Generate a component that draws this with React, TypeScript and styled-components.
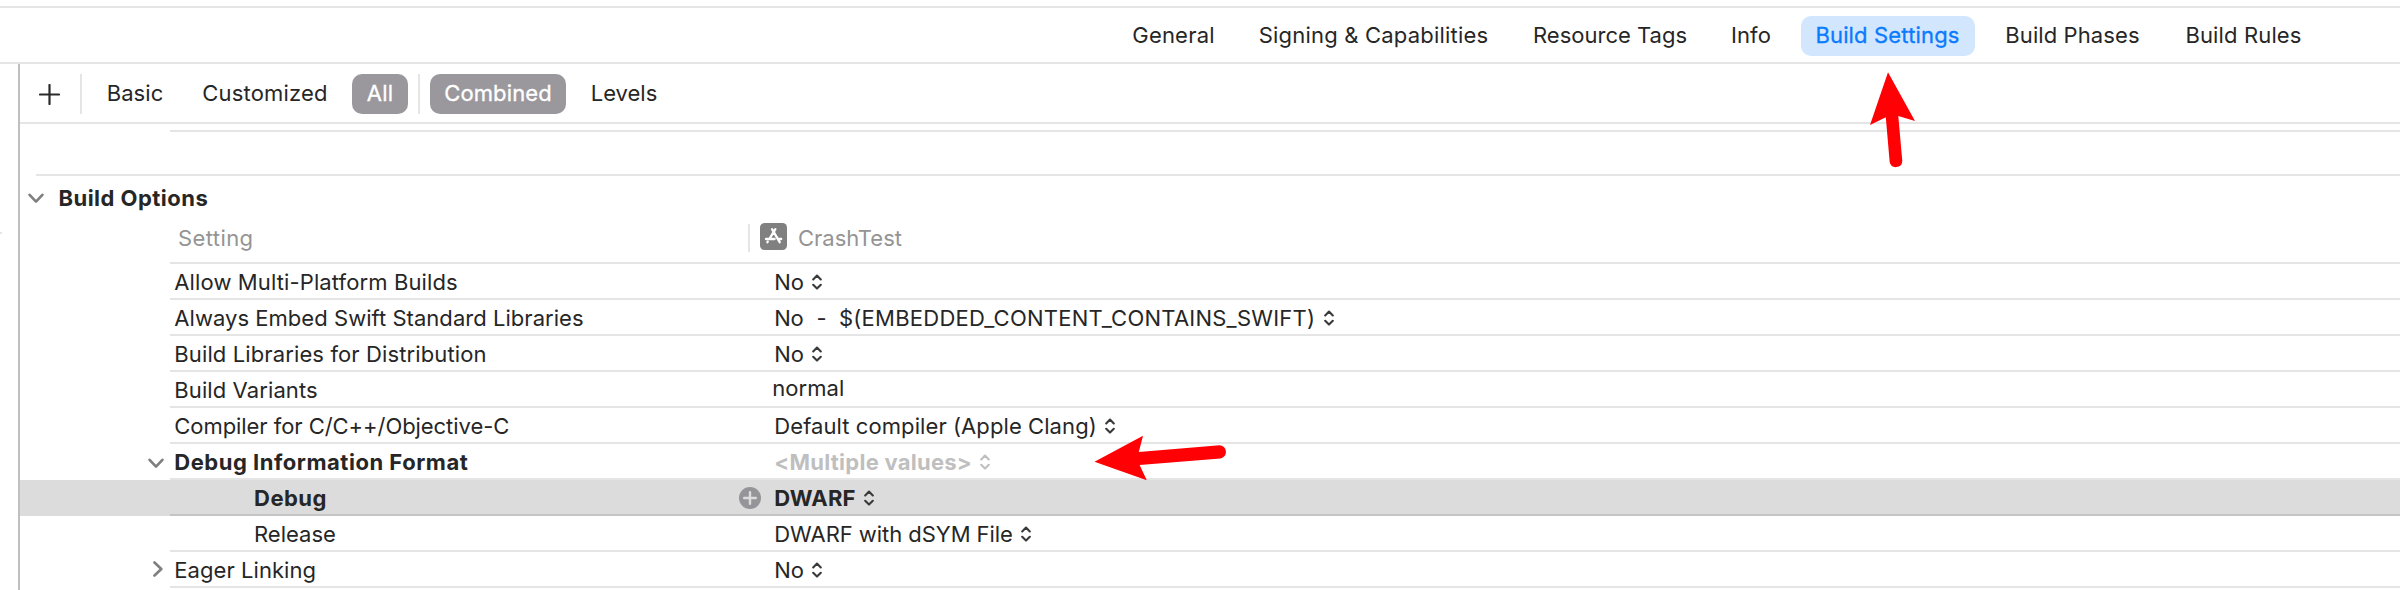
import React from "react";
import styled, { createGlobalStyle, css } from "styled-components";

const LINE = "#e5e5e5";

const GlobalStyle = createGlobalStyle`
  body {
    margin: 0;
    background: #fff;
    color: #262626;
    font: 400 22px/26px Inter, "Liberation Sans", sans-serif;
    -webkit-font-smoothing: antialiased;
  }
  * { box-sizing: border-box; }
`;

const Window = styled.div`
  position: relative;
  display: flex;
  flex-direction: column;
  height: 590px;
  padding-top: 6px;
  overflow: hidden;
  white-space: nowrap;
`;

const Label = styled.span<{ $track?: number }>`
  letter-spacing: ${(p) => p.$track ?? 0}px;
  white-space: pre;
`;

const TabBar = styled.nav`
  display: flex;
  justify-content: flex-end;
  gap: 14px;
  height: 58px;
  padding: 8px 83px 0 0;
  border-top: 2px solid ${LINE};
  border-bottom: 2px solid ${LINE};
`;

const Tab = styled.div<{ $width: number; $active?: boolean }>`
  display: flex;
  align-items: center;
  justify-content: center;
  width: ${(p) => p.$width}px;
  height: 40px;
  padding: 0 0 2px 1px;
  border-radius: 10px;
  ${(p) =>
    p.$active &&
    css`
      padding: 0 1px 2px 0;
      background: #d2e6fe;
      color: #0a7aff;
      -webkit-text-stroke: 0.3px #0a7aff;
    `}
`;

const Body = styled.div`
  display: flex;
  flex: 1;
  min-height: 0;
`;

const Rail = styled.div`
  width: 18px;
  padding-top: 168px;
`;

const RailMark = styled.div`
  width: 2px;
  height: 2px;
  background: ${LINE};
`;

const Main = styled.main`
  flex: 1;
  border-left: 2px solid #bfbfbf;
`;

const Toolbar = styled.div`
  display: flex;
  gap: 10px;
  height: 60px;
  padding: 10px 0 0 19px;
  border-bottom: 2px solid ${LINE};
`;

const AddButton = styled.div`
  display: flex;
  width: 31px;
  padding-top: 10px;
`;

const ToolDivider = styled.div`
  width: 2px;
  height: 40px;
  background: ${LINE};
`;

const Filter = styled.div<{ $width: number; $active?: boolean }>`
  display: flex;
  align-items: center;
  justify-content: center;
  width: ${(p) => p.$width}px;
  height: 40px;
  padding: 0 0 2px 1px;
  border-radius: 10px;
  ${(p) =>
    p.$active &&
    css`
      padding: 0 0 2px;
      background: #9a989d;
      color: #fff;
      -webkit-text-stroke: 0.3px #fff;
    `}
`;

const PreviousSectionEnd = styled.div`
  height: 44px;
  margin: 6px 0 0 150px;
  border-top: 2px solid ${LINE};
`;

const SectionHeader = styled.div`
  display: flex;
  align-items: center;
  height: 46px;
  margin-left: 16px;
  border-top: 2px solid ${LINE};
  font-weight: 700;

  svg { margin: 1px 14.5px 0 -8px; }
`;

const ColumnHeader = styled.div`
  display: flex;
  height: 44px;
  margin-left: 150px;
  padding: 4px 0 0 8px;
  border-bottom: 2px solid ${LINE};
  color: #949494;
`;

const SettingColumn = styled.div`
  width: 570px;
  line-height: 28px;
`;

const TargetColumn = styled.div`
  display: flex;
  height: 28px;
  padding-left: 10px;
  border-left: 2px solid ${LINE};
  line-height: 28px;

  svg { margin: -1px 11px 0 0; }
`;

const Row = styled.div<{ $selected?: boolean }>`
  display: flex;
  height: 36px;
  background: ${(p) => (p.$selected ? "#dcdcdc" : "transparent")};
`;

const Gutter = styled.div<{ $open?: boolean }>`
  display: flex;
  align-items: center;
  justify-content: flex-end;
  width: 150px;
  padding: ${(p) => (p.$open ? "2px 6px 0 0" : "0 7px 2px 0")};
`;

const Cells = styled.div<{ $selected?: boolean; $bold?: boolean }>`
  display: flex;
  flex: 1;
  align-items: center;
  padding-top: 2px;
  border-bottom: 2px solid ${(p) => (p.$selected ? "#c4c4c4" : LINE)};
  font-weight: ${(p) => (p.$bold ? 700 : 400)};
`;

const NameCell = styled.div<{ $nested?: boolean }>`
  width: 569px;
  padding-left: ${(p) => (p.$nested ? 84 : 4.3)}px;
`;

const AddSlot = styled.div`
  display: flex;
  width: 35.3px;
`;

const ValueCell = styled.div<{ $muted?: boolean; $editable?: boolean }>`
  display: flex;
  align-items: center;
  color: ${(p) => (p.$muted ? "#bfbfbf" : "inherit")};
  ${(p) =>
    p.$editable &&
    css`
      margin: -4px 0 0 -2px;
    `}

  svg { margin-left: 8.4px; color: ${(p) => (p.$muted ? "#bfbfbf" : "#3a3a3a")}; }
`;

const Dash = styled.span`
  width: 35.5px;
  padding-left: 13px;
`;

const Pointer = styled.svg<{ $x: number; $y: number }>`
  position: absolute;
  left: ${(p) => p.$x}px;
  top: ${(p) => p.$y}px;
  fill: #ff0005;
`;

const ChevronDown = () => (
  <svg width="16" height="11" viewBox="0 0 16 11" fill="none" stroke="#7f7f7f" strokeWidth="2.6" strokeLinecap="round" strokeLinejoin="round">
    <path d="M1.6 1.8 8 8.6l6.4-6.8" />
  </svg>
);

const ChevronRight = () => (
  <svg width="10" height="16" viewBox="0 0 10 16" fill="none" stroke="#7f7f7f" strokeWidth="2.6" strokeLinecap="round" strokeLinejoin="round">
    <path d="M1.5 1.5 8.3 8l-6.8 6.5" />
  </svg>
);

const UpDown = () => (
  <svg width="10" height="16" viewBox="0 0 10 16" fill="none" stroke="currentColor" strokeWidth="2.1" strokeLinecap="round" strokeLinejoin="round">
    <path d="M1.2 5.4 5 1.6l3.8 3.8M1.2 10.8 5 14.6l3.8-3.8" />
  </svg>
);

const Plus = () => (
  <svg width="21" height="21" viewBox="0 0 21 21" stroke="#2b2b2b" strokeWidth="2.2" strokeLinecap="round">
    <path d="M10.5 1v19M1 10.5h19" />
  </svg>
);

const AddCircle = () => (
  <svg width="22" height="22" viewBox="0 0 22 22">
    <circle cx="11" cy="11" r="11" fill="#959499" />
    <path d="M11 5.2v11.6M5.2 11h11.6" stroke="#dcdcdc" strokeWidth="2.4" strokeLinecap="round" />
  </svg>
);

const AppIcon = () => (
  <svg width="27" height="27" viewBox="0 0 27 27">
    <rect width="27" height="27" rx="4.5" fill="#808080" />
    <g stroke="#fff" strokeWidth="2.3" strokeLinecap="round" fill="none">
      <path d="M15.4 6.2 9.6 15.6M12 6.2l7.7 13M6 16h8.6M18.6 16h2.6M7.8 18.6l-.4.6" />
    </g>
  </svg>
);

const tabs = [
  { text: "General", width: 108, track: 0.2 },
  { text: "Signing & Capabilities", width: 264, track: 0.2 },
  { text: "Resource Tags", width: 181, track: 0 },
  { text: "Info", width: 73, track: 0.06 },
  { text: "Build Settings", width: 174, track: 0.16, active: true },
  { text: "Build Phases", width: 166, track: 0.1 },
  { text: "Build Rules", width: 148, track: 0.14 },
];

type Setting = {
  name: string;
  track: number;
  value: string;
  valueTrack: number;
  fallback?: string;
  state?: "open" | "closed";
  bold?: boolean;
  nested?: boolean;
  selected?: boolean;
  muted?: boolean;
  editable?: boolean;
};

const settings: Setting[] = [
  { name: "Allow Multi-Platform Builds", track: 0.12, value: "No", valueTrack: 0 },
  { name: "Always Embed Swift Standard Libraries", track: 0.04, value: "No", valueTrack: -0.3, fallback: "$(EMBEDDED_CONTENT_CONTAINS_SWIFT)" },
  { name: "Build Libraries for Distribution", track: 0.12, value: "No", valueTrack: 0 },
  { name: "Build Variants", track: 0.1, value: "normal", valueTrack: 0.05, editable: true },
  { name: "Compiler for C/C++/Objective-C", track: -0.06, value: "Default compiler (Apple Clang)", valueTrack: 0.08 },
  { name: "Debug Information Format", track: 0.52, value: "<Multiple values>", valueTrack: 0.26, state: "open", bold: true, muted: true },
  { name: "Debug", track: 0.5, value: "DWARF", valueTrack: 0.2, bold: true, nested: true, selected: true },
  { name: "Release", track: 0, value: "DWARF with dSYM File", valueTrack: -0.05, nested: true },
  { name: "Eager Linking", track: 0.06, value: "No", valueTrack: 0, state: "closed" },
];

const SettingRow = ({ s }: { s: Setting }) => (
  <Row $selected={s.selected}>
    <Gutter $open={s.state === "open"}>
      {s.state === "open" && <ChevronDown />}
      {s.state === "closed" && <ChevronRight />}
    </Gutter>
    <Cells $selected={s.selected} $bold={s.bold}>
      <NameCell $nested={s.nested}>
        <Label $track={s.track}>{s.name}</Label>
      </NameCell>
      <AddSlot>{s.selected && <AddCircle />}</AddSlot>
      <ValueCell $muted={s.muted} $editable={s.editable}>
        <Label $track={s.valueTrack}>{s.value}</Label>
        {s.fallback && (
          <>
            <Dash>-</Dash>
            <Label $track={0.24}>{s.fallback}</Label>
          </>
        )}
        {!s.editable && <UpDown />}
      </ValueCell>
    </Cells>
  </Row>
);

export default function App() {
  return (
    <>
      <GlobalStyle />
      <Window>
        <TabBar>
          {tabs.map((t) => (
            <Tab key={t.text} $width={t.width} $active={t.active}>
              <Label $track={t.track}>{t.text}</Label>
            </Tab>
          ))}
        </TabBar>
        <Body>
          <Rail>
            <RailMark />
          </Rail>
          <Main>
            <Toolbar>
              <AddButton>
                <Plus />
              </AddButton>
              <ToolDivider />
              <Filter $width={85}><Label $track={0.08}>Basic</Label></Filter>
              <Filter $width={155}><Label $track={0.2}>Customized</Label></Filter>
              <Filter $width={56} $active><Label $track={0.2}>All</Label></Filter>
              <ToolDivider />
              <Filter $width={136} $active><Label $track={0.12}>Combined</Label></Filter>
              <Filter $width={95}><Label>Levels</Label></Filter>
            </Toolbar>
            <PreviousSectionEnd />
            <SectionHeader>
              <ChevronDown />
              <Label $track={0.47}>Build Options</Label>
            </SectionHeader>
            <ColumnHeader>
              <SettingColumn><Label $track={0.4}>Setting</Label></SettingColumn>
              <TargetColumn>
                <AppIcon />
                <Label>CrashTest</Label>
              </TargetColumn>
            </ColumnHeader>
            {settings.map((s) => (
              <SettingRow key={s.name} s={s} />
            ))}
          </Main>
        </Body>
        <Pointer $x={1865} $y={70} width="55" height="102">
          <path d="M23 2.3 50 51 33.3 46 37.3 91.3A6.4 6.4 0 0 1 24.7 92.2L20.8 47.3 5 55Z" />
        </Pointer>
        <Pointer $x={1090} $y={430} width="142" height="56">
          <path d="M4.5 31.8 53 5.7 48.8 22 129.5 15.3A6.6 6.6 0 0 1 130.5 28.4L49.6 34.9 56.8 50.2Z" />
        </Pointer>
      </Window>
    </>
  );
}
